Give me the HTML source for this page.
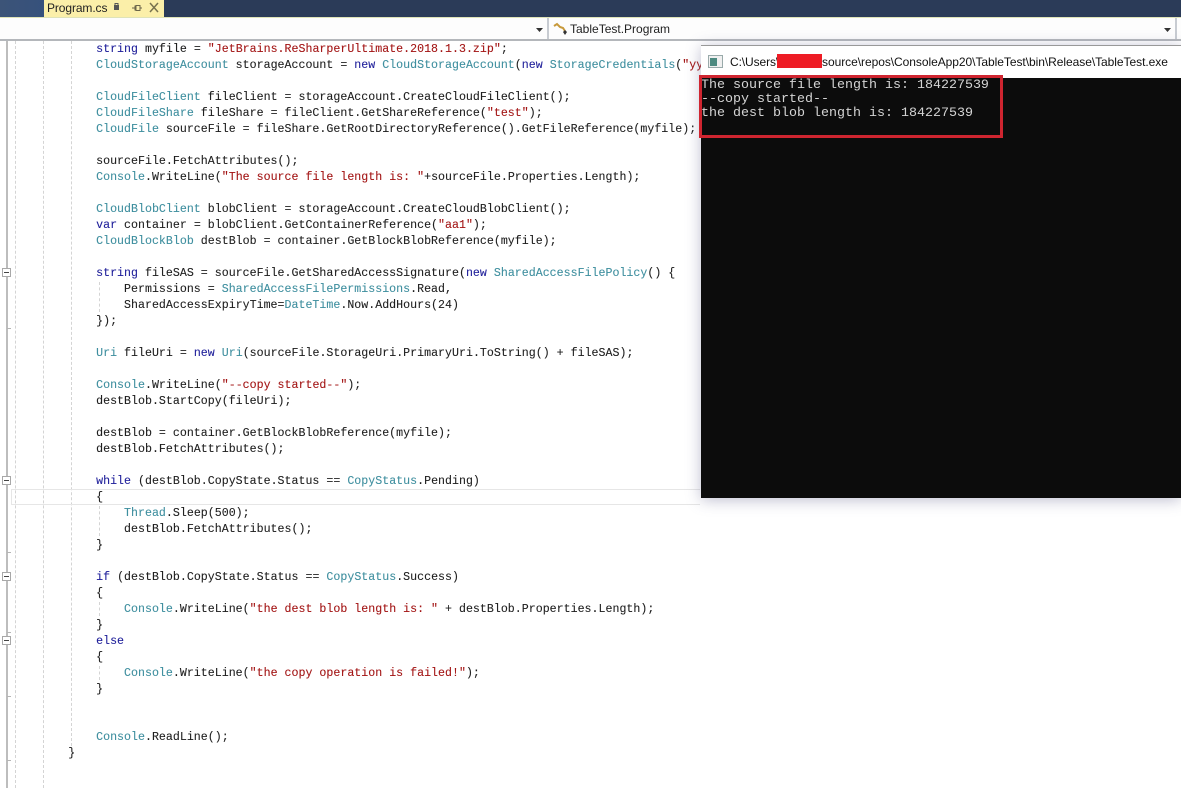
<!DOCTYPE html>
<html><head><meta charset="utf-8">
<style>
html,body{margin:0;padding:0;background:#fff;}
#p{position:relative;width:1181px;height:788px;overflow:hidden;background:#fff;}
.a{position:absolute;}
pre{margin:0;font-family:"Liberation Mono",monospace;}
#code{left:12.400px;top:42px;font-size:11.6px;letter-spacing:.02px;line-height:16px;color:#1e1e1e;white-space:pre;-webkit-text-stroke:.1px;}
.k{color:#1f1f9a}.t{color:#3f8f9f}.s{color:#a31515}
.sans{font-family:"Liberation Sans",sans-serif;white-space:pre;}
.g{width:0;border-left:1px dashed #d4d4d4;}
.tick{width:4px;height:1px;background:#b5b5b5;left:7px;}
.fold{left:2px;width:7px;height:7px;border:1px solid #a8a8a8;background:#fff;}
.fold:after{content:"";position:absolute;left:1px;top:3px;width:5px;height:1px;background:#444;}
#con{left:701px;top:45px;width:480px;height:453px;background:#0c0c0c;box-shadow:0 2px 14px rgba(110,110,150,.45);border-top:1px solid #999;box-sizing:border-box;}
</style></head><body>
<div id="p">
<div class="a" style="left:0;top:0;width:1181px;height:17px;background:#2b3b58"></div>
<div class="a" style="left:0;top:0;width:44px;height:17px;background:linear-gradient(90deg,#3c5478,#36517c)"></div>
<div class="a" style="left:44px;top:0;width:120px;height:17px;background:#fbefa9"></div>
<div class="a sans" style="left:47px;top:0;font-size:12px;letter-spacing:-.1px;line-height:17px;color:#222">Program.cs</div>
<svg class="a" style="left:110px;top:0" width="54" height="17">
<rect x="4" y="5" width="5" height="5" fill="#555"/><path d="M5 5V3.5h3V5" stroke="#555" fill="none"/>
<path d="M22 8h4M26 5.5v5h4v-5zM30 8h2M25 5.500v5" stroke="#6c664a" fill="none"/>
<path d="M40 3l8 9M48 3l-8 9" stroke="#77724f" stroke-width="1.500" fill="none"/>
</svg>
<div class="a" style="left:0;top:17px;width:1181px;height:1px;background:#dfe3b8"></div>
<div class="a" style="left:0;top:18px;width:1181px;height:21px;background:#fdfdfd"></div>
<div class="a" style="left:0;top:39px;width:1181px;height:2px;background:#b4b7bb"></div>
<svg class="a" style="left:536px;top:28px" width="8" height="5"><path d="M0 0h7L3.500 4z" fill="#333"/></svg>
<div class="a" style="left:547px;top:18px;width:2px;height:21px;background:#c8ccd2"></div>
<svg class="a" style="left:552px;top:21px" width="17" height="16">
<path d="M2 5l3-2 3 3 3 1 2 3" stroke="#c89a3c" stroke-width="2" fill="none"/><path d="M11 11l2-2 2 2-2 3z" fill="#333"/>
</svg>
<div class="a sans" style="left:570px;top:20px;font-size:12px;line-height:19px;color:#222">TableTest.Program</div>
<svg class="a" style="left:1164px;top:28px" width="8" height="5"><path d="M0 0h7L3.500 4z" fill="#333"/></svg>
<div class="a" style="left:1175px;top:18px;width:2px;height:21px;background:#c8ccd2"></div>

<div class="a" style="left:6px;top:41px;width:2px;height:747px;background:#bdbdbd"></div>
<div class="a g" style="left:15px;top:41px;height:747px"></div>
<div class="a g" style="left:43px;top:41px;height:747px"></div>
<div class="a g" style="left:71px;top:41px;height:705px"></div>
<div class="a g" style="left:99px;top:282px;height:30px"></div>
<div class="a g" style="left:99px;top:506px;height:30px"></div>
<div class="a g" style="left:99px;top:602px;height:14px"></div>
<div class="a g" style="left:99px;top:666px;height:14px"></div>
<div class="a fold" style="top:268px"></div>
<div class="a fold" style="top:476px"></div>
<div class="a fold" style="top:572px"></div>
<div class="a fold" style="top:636px"></div>
<div class="a tick" style="top:328px"></div>
<div class="a tick" style="top:552px"></div>
<div class="a tick" style="top:632px"></div>
<div class="a tick" style="top:696px"></div>
<div class="a tick" style="top:760px"></div>
<div class="a" style="left:11px;top:489px;width:688px;height:14px;border:1px solid #e6e6e6;border-right:0"></div>

<pre class="a" id="code">            <span class="k">string</span> myfile = <span class="s">"JetBrains.ReSharperUltimate.2018.1.3.zip"</span>;
            <span class="t">CloudStorageAccount</span> storageAccount = <span class="k">new</span> <span class="t">CloudStorageAccount</span>(<span class="k">new</span> <span class="t">StorageCredentials</span>(<span class="s">"yy"</span>

            <span class="t">CloudFileClient</span> fileClient = storageAccount.CreateCloudFileClient();
            <span class="t">CloudFileShare</span> fileShare = fileClient.GetShareReference(<span class="s">"test"</span>);
            <span class="t">CloudFile</span> sourceFile = fileShare.GetRootDirectoryReference().GetFileReference(myfile);

            sourceFile.FetchAttributes();
            <span class="t">Console</span>.WriteLine(<span class="s">"The source file length is: "</span>+sourceFile.Properties.Length);

            <span class="t">CloudBlobClient</span> blobClient = storageAccount.CreateCloudBlobClient();
            <span class="k">var</span> container = blobClient.GetContainerReference(<span class="s">"aa1"</span>);
            <span class="t">CloudBlockBlob</span> destBlob = container.GetBlockBlobReference(myfile);

            <span class="k">string</span> fileSAS = sourceFile.GetSharedAccessSignature(<span class="k">new</span> <span class="t">SharedAccessFilePolicy</span>() {
                Permissions = <span class="t">SharedAccessFilePermissions</span>.Read,
                SharedAccessExpiryTime=<span class="t">DateTime</span>.Now.AddHours(24)
            });

            <span class="t">Uri</span> fileUri = <span class="k">new</span> <span class="t">Uri</span>(sourceFile.StorageUri.PrimaryUri.ToString() + fileSAS);

            <span class="t">Console</span>.WriteLine(<span class="s">"--copy started--"</span>);
            destBlob.StartCopy(fileUri);

            destBlob = container.GetBlockBlobReference(myfile);
            destBlob.FetchAttributes();

            <span class="k">while</span> (destBlob.CopyState.Status == <span class="t">CopyStatus</span>.Pending)
            {
                <span class="t">Thread</span>.Sleep(500);
                destBlob.FetchAttributes();
            }

            <span class="k">if</span> (destBlob.CopyState.Status == <span class="t">CopyStatus</span>.Success)
            {
                <span class="t">Console</span>.WriteLine(<span class="s">"the dest blob length is: "</span> + destBlob.Properties.Length);
            }
            <span class="k">else</span>
            {
                <span class="t">Console</span>.WriteLine(<span class="s">"the copy operation is failed!"</span>);
            }


            <span class="t">Console</span>.ReadLine();
        }</pre>

<div class="a" id="con"></div>
<div class="a" style="left:701px;top:46px;width:480px;height:32px;background:#fff"></div>
<svg class="a" style="left:708px;top:55px" width="16" height="14">
<rect x=".5" y=".5" width="14" height="12" fill="#f0f0f0" stroke="#9aa"/><rect x="2" y="3" width="7" height="8" fill="#4d8a80"/>
</svg>
<div class="a sans" style="left:730px;top:54px;font-size:12px;letter-spacing:-.1px;line-height:16px;color:#111">C:\Users\</div>
<div class="a" style="left:777px;top:54px;width:45px;height:14px;background:#ee1c25"></div>
<div class="a sans" style="left:822px;top:54px;font-size:12px;line-height:16px;color:#111;letter-spacing:-.05px">source\repos\ConsoleApp20\TableTest\bin\Release\TableTest.exe</div>
<pre class="a" style="left:701px;top:79px;font-size:13.33px;line-height:14px;color:#d4d4d4;">The source file length is: 184227539
--copy started--
the dest blob length is: 184227539</pre>
<div class="a" style="left:699px;top:75px;width:304px;height:63px;border:3px solid #cf2530;box-sizing:border-box"></div>
</div>
</body></html>
